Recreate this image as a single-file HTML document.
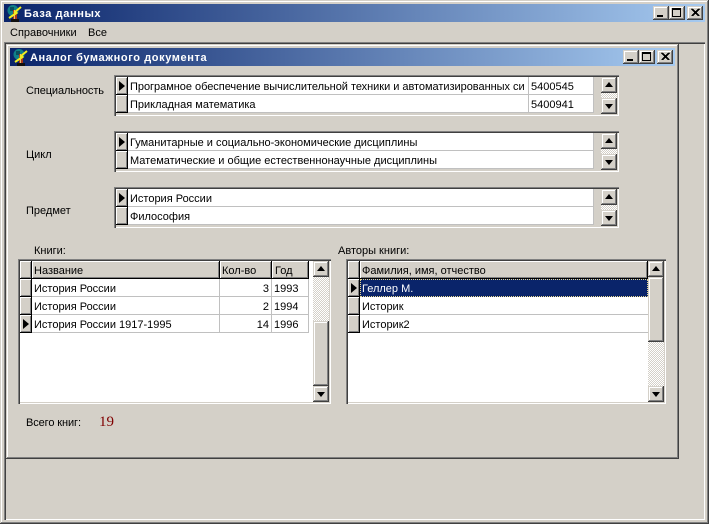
<!DOCTYPE html>
<html><head><meta charset="utf-8">
<style>
html,body{margin:0;padding:0}
body{position:relative;width:709px;height:524px;overflow:hidden;background:#d4d0c8;font:11px "Liberation Sans",sans-serif;color:#000}
div,svg{position:absolute;box-sizing:border-box}
.t{white-space:nowrap;height:19px;line-height:20px;overflow:hidden}
.btn{background:#d4d0c8;box-shadow:inset -1px -1px #404040,inset 1px 1px #d4d0c8,inset -2px -2px #808080,inset 2px 2px #fff}
.ind{background:#d4d0c8;box-shadow:inset -1px -1px #000,inset 1px 1px #fff,inset -2px -2px #808080}
.grid{box-shadow:inset 1px 1px #808080,inset 2px 2px #404040,inset -1px -1px #fff,inset -2px -2px #d4d0c8}
.hatch{background:repeating-conic-gradient(#d4d0c8 0 25%,#fff 0 50%) 0 0/2px 2px}
.w{background:#fff}
.l{background:#c0c0c0}
.title{background:linear-gradient(90deg,#0a246a,#a6caf0)}
.tt{color:#fff;font-weight:bold;letter-spacing:.6px}
.tri{width:0;height:0}
</style></head><body>

<!-- outer window frame -->
<div style="left:0;top:0;width:709px;height:524px;box-shadow:inset -1px -1px #404040,inset 1px 1px #d4d0c8,inset -2px -2px #808080,inset 2px 2px #fff"></div>
<div class="title" style="left:4px;top:4px;width:701px;height:18px"></div>
<svg style="left:6px;top:4px" width="16" height="18" viewBox="0 0 16 18"><circle cx="7" cy="6.5" r="5.5" fill="#108088"/><path d="M4 3h4v4H4z" fill="#0b4f5c"/><rect x="7" y="6" width="4" height="9" fill="#a83818"/><rect x="8" y="6" width="1" height="9" fill="#e8c070"/><rect x="5" y="15" width="8" height="3" fill="#101010"/><path d="M15 3L9 8l1.500 1L3 14" stroke="#f2f020" stroke-width="2" fill="none"/></svg>
<div class="t tt" style="left:24px;top:4px">База данных</div>
<div class="btn" style="left:653px;top:6px;width:16px;height:14px"></div>
<div class="btn" style="left:669px;top:6px;width:16px;height:14px"></div>
<div class="btn" style="left:687px;top:6px;width:16px;height:14px"></div>
<svg style="left:653px;top:6px" width="50" height="14" viewBox="0 0 50 14"><path d="M4 9h6v2H4z" fill="#000"/><path d="M19 2h9v9h-9z M20 4v6h7V4z" fill="#000" fill-rule="evenodd"/><path d="M38.500 3l7 7M45.500 3l-7 7M39.500 3l7 7M46.500 3l-7 7" stroke="#000" stroke-width="1" fill="none" shape-rendering="crispEdges"/></svg>
<div class="t" style="left:10px;top:23px">Справочники</div>
<div class="t" style="left:88px;top:23px">Все</div>

<!-- MDI client edge -->
<div style="left:4px;top:42px;width:701px;height:478px;box-shadow:inset 1px 1px #808080,inset 2px 2px #404040,inset -1px -1px #fff,inset -2px -2px #d4d0c8"></div>

<!-- child window frame -->
<div style="left:6px;top:44px;width:673px;height:415px;box-shadow:inset -1px -1px #404040,inset 1px 1px #d4d0c8,inset -2px -2px #808080,inset 2px 2px #fff"></div>
<div class="title" style="left:10px;top:48px;width:665px;height:18px"></div>
<svg style="left:12px;top:48px" width="16" height="18" viewBox="0 0 16 18"><circle cx="7" cy="6.5" r="5.5" fill="#108088"/><path d="M4 3h4v4H4z" fill="#0b4f5c"/><rect x="7" y="6" width="4" height="9" fill="#a83818"/><rect x="8" y="6" width="1" height="9" fill="#e8c070"/><rect x="5" y="15" width="8" height="3" fill="#101010"/><path d="M15 3L9 8l1.500 1L3 14" stroke="#f2f020" stroke-width="2" fill="none"/></svg>
<div class="t tt" style="left:30px;top:48px">Аналог бумажного документа</div>
<div class="btn" style="left:623px;top:50px;width:16px;height:14px"></div>
<div class="btn" style="left:639px;top:50px;width:16px;height:14px"></div>
<div class="btn" style="left:657px;top:50px;width:16px;height:14px"></div>
<svg style="left:623px;top:50px" width="50" height="14" viewBox="0 0 50 14"><path d="M4 9h6v2H4z" fill="#000"/><path d="M19 2h9v9h-9z M20 4v6h7V4z" fill="#000" fill-rule="evenodd"/><path d="M38.500 3l7 7M45.500 3l-7 7M39.500 3l7 7M46.500 3l-7 7" stroke="#000" stroke-width="1" fill="none" shape-rendering="crispEdges"/></svg>

<!-- labels -->
<div class="t" style="left:26px;top:81px;letter-spacing:-.1px">Специальность</div>
<div class="t" style="left:26px;top:145px">Цикл</div>
<div class="t" style="left:26px;top:201px">Предмет</div>

<!-- grid 1 -->
<div class="grid" style="left:114px;top:75px;width:505px;height:41px"></div>
<div class="w" style="left:128px;top:77px;width:465px;height:36px"></div>
<div class="l" style="left:128px;top:94px;width:465px;height:1px"></div>
<div class="l" style="left:128px;top:112px;width:465px;height:1px"></div>
<div class="l" style="left:528px;top:77px;width:1px;height:36px"></div>
<div class="l" style="left:593px;top:77px;width:1px;height:36px"></div>
<div class="ind" style="left:116px;top:77px;width:12px;height:18px"></div>
<div class="ind" style="left:116px;top:95px;width:12px;height:18px"></div>
<div class="tri" style="left:119px;top:81px;border-left:6px solid #000;border-top:5px solid transparent;border-bottom:5px solid transparent"></div>
<div class="t" style="left:130px;top:77px;width:398px;letter-spacing:-.03px">Програмное обеспечение вычислительной техники и автоматизированных си</div>
<div class="t" style="left:130px;top:95px;width:398px">Прикладная математика</div>
<div class="t" style="left:531px;top:77px">5400545</div>
<div class="t" style="left:531px;top:95px">5400941</div>
<div class="hatch" style="left:601px;top:92px;width:16px;height:6px"></div>
<div class="btn" style="left:601px;top:77px;width:16px;height:16px"></div>
<div class="btn" style="left:601px;top:98px;width:16px;height:16px"></div>
<div class="tri" style="left:605px;top:82px;border-bottom:5px solid #000;border-left:4px solid transparent;border-right:4px solid transparent"></div>
<div class="tri" style="left:605px;top:104px;border-top:5px solid #000;border-left:4px solid transparent;border-right:4px solid transparent"></div>

<!-- grid 2 -->
<div class="grid" style="left:114px;top:131px;width:505px;height:41px"></div>
<div class="w" style="left:128px;top:133px;width:465px;height:36px"></div>
<div class="l" style="left:128px;top:150px;width:465px;height:1px"></div>
<div class="l" style="left:128px;top:168px;width:465px;height:1px"></div>
<div class="l" style="left:593px;top:133px;width:1px;height:36px"></div>
<div class="ind" style="left:116px;top:133px;width:12px;height:18px"></div>
<div class="ind" style="left:116px;top:151px;width:12px;height:18px"></div>
<div class="tri" style="left:119px;top:137px;border-left:6px solid #000;border-top:5px solid transparent;border-bottom:5px solid transparent"></div>
<div class="t" style="left:130px;top:133px">Гуманитарные и социально-экономические дисциплины</div>
<div class="t" style="left:130px;top:151px">Математические и общие естественнонаучные дисциплины</div>
<div class="hatch" style="left:601px;top:148px;width:16px;height:6px"></div>
<div class="btn" style="left:601px;top:133px;width:16px;height:16px"></div>
<div class="btn" style="left:601px;top:154px;width:16px;height:16px"></div>
<div class="tri" style="left:605px;top:138px;border-bottom:5px solid #000;border-left:4px solid transparent;border-right:4px solid transparent"></div>
<div class="tri" style="left:605px;top:160px;border-top:5px solid #000;border-left:4px solid transparent;border-right:4px solid transparent"></div>

<!-- grid 3 -->
<div class="grid" style="left:114px;top:187px;width:505px;height:41px"></div>
<div class="w" style="left:128px;top:189px;width:465px;height:36px"></div>
<div class="l" style="left:128px;top:206px;width:465px;height:1px"></div>
<div class="l" style="left:128px;top:224px;width:465px;height:1px"></div>
<div class="l" style="left:593px;top:189px;width:1px;height:36px"></div>
<div class="ind" style="left:116px;top:189px;width:12px;height:18px"></div>
<div class="ind" style="left:116px;top:207px;width:12px;height:18px"></div>
<div class="tri" style="left:119px;top:193px;border-left:6px solid #000;border-top:5px solid transparent;border-bottom:5px solid transparent"></div>
<div class="t" style="left:130px;top:189px">История России</div>
<div class="t" style="left:130px;top:207px">Философия</div>
<div class="hatch" style="left:601px;top:204px;width:16px;height:6px"></div>
<div class="btn" style="left:601px;top:189px;width:16px;height:16px"></div>
<div class="btn" style="left:601px;top:210px;width:16px;height:16px"></div>
<div class="tri" style="left:605px;top:194px;border-bottom:5px solid #000;border-left:4px solid transparent;border-right:4px solid transparent"></div>
<div class="tri" style="left:605px;top:216px;border-top:5px solid #000;border-left:4px solid transparent;border-right:4px solid transparent"></div>

<!-- books -->
<div class="t" style="left:34px;top:241px">Книги:</div>
<div class="w" style="left:18px;top:259px;width:313px;height:145px"></div>
<div class="grid" style="left:18px;top:259px;width:313px;height:145px"></div>
<div class="ind" style="left:20px;top:261px;width:12px;height:18px"></div>
<div class="ind" style="left:32px;top:261px;width:188px;height:18px"></div>
<div class="ind" style="left:220px;top:261px;width:52px;height:18px"></div>
<div class="ind" style="left:272px;top:261px;width:37px;height:18px"></div>
<div class="t" style="left:34px;top:261px">Название</div>
<div class="t" style="left:222px;top:261px">Кол-во</div>
<div class="t" style="left:275px;top:261px">Год</div>
<div class="ind" style="left:20px;top:279px;width:12px;height:18px"></div>
<div class="ind" style="left:20px;top:297px;width:12px;height:18px"></div>
<div class="ind" style="left:20px;top:315px;width:12px;height:18px"></div>
<div class="tri" style="left:23px;top:319px;border-left:6px solid #000;border-top:5px solid transparent;border-bottom:5px solid transparent"></div>
<div class="l" style="left:32px;top:296px;width:277px;height:1px"></div>
<div class="l" style="left:32px;top:314px;width:277px;height:1px"></div>
<div class="l" style="left:32px;top:332px;width:277px;height:1px"></div>
<div class="l" style="left:219px;top:279px;width:1px;height:54px"></div>
<div class="l" style="left:271px;top:279px;width:1px;height:54px"></div>
<div class="l" style="left:308px;top:279px;width:1px;height:54px"></div>
<div class="t" style="left:34px;top:279px">История России</div>
<div class="t" style="left:34px;top:297px">История России</div>
<div class="t" style="left:34px;top:315px">История России 1917-1995</div>
<div class="t" style="left:220px;top:279px;width:49px;text-align:right">3</div>
<div class="t" style="left:220px;top:297px;width:49px;text-align:right">2</div>
<div class="t" style="left:220px;top:315px;width:49px;text-align:right">14</div>
<div class="t" style="left:274px;top:279px">1993</div>
<div class="t" style="left:274px;top:297px">1994</div>
<div class="t" style="left:274px;top:315px">1996</div>
<div class="hatch" style="left:313px;top:277px;width:16px;height:44px"></div>
<div class="btn" style="left:313px;top:261px;width:16px;height:16px"></div>
<div class="btn" style="left:313px;top:321px;width:16px;height:65px"></div>
<div class="btn" style="left:313px;top:386px;width:16px;height:16px"></div>
<div class="tri" style="left:317px;top:266px;border-bottom:5px solid #000;border-left:4px solid transparent;border-right:4px solid transparent"></div>
<div class="tri" style="left:317px;top:392px;border-top:5px solid #000;border-left:4px solid transparent;border-right:4px solid transparent"></div>

<!-- authors -->
<div class="t" style="left:338px;top:241px">Авторы книги:</div>
<div class="w" style="left:346px;top:259px;width:320px;height:145px"></div>
<div class="grid" style="left:346px;top:259px;width:320px;height:145px"></div>
<div class="ind" style="left:348px;top:261px;width:12px;height:18px"></div>
<div class="ind" style="left:360px;top:261px;width:288px;height:18px"></div>
<div class="t" style="left:362px;top:261px">Фамилия, имя, отчество</div>
<div class="ind" style="left:348px;top:279px;width:12px;height:18px"></div>
<div class="ind" style="left:348px;top:297px;width:12px;height:18px"></div>
<div class="ind" style="left:348px;top:315px;width:12px;height:18px"></div>
<div class="tri" style="left:351px;top:283px;border-left:6px solid #000;border-top:5px solid transparent;border-bottom:5px solid transparent"></div>
<div style="left:360px;top:279px;width:288px;height:18px;background:#0a246a;outline:1px dotted #e8d890;outline-offset:-1px"></div>
<div class="l" style="left:360px;top:314px;width:288px;height:1px"></div>
<div class="l" style="left:360px;top:332px;width:288px;height:1px"></div>
<div class="t" style="left:362px;top:279px;color:#fff">Геллер М.</div>
<div class="t" style="left:362px;top:297px">Историк</div>
<div class="t" style="left:362px;top:315px">Историк2</div>
<div class="hatch" style="left:648px;top:342px;width:16px;height:44px"></div>
<div class="btn" style="left:648px;top:261px;width:16px;height:16px"></div>
<div class="btn" style="left:648px;top:277px;width:16px;height:65px"></div>
<div class="btn" style="left:648px;top:386px;width:16px;height:16px"></div>
<div class="tri" style="left:652px;top:266px;border-bottom:5px solid #000;border-left:4px solid transparent;border-right:4px solid transparent"></div>
<div class="tri" style="left:652px;top:392px;border-top:5px solid #000;border-left:4px solid transparent;border-right:4px solid transparent"></div>

<!-- total -->
<div class="t" style="left:26px;top:413px;letter-spacing:-.1px">Всего книг:</div>
<div class="t" style="left:99px;top:412px;font:15px/20px 'Liberation Serif',serif;color:#800000">19</div>

</body></html>
